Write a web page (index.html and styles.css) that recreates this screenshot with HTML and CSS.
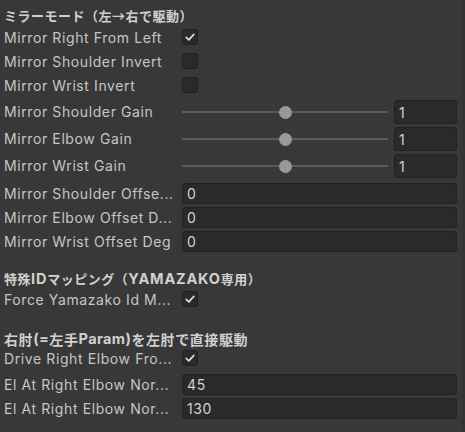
FILE: index.html
```html
<!DOCTYPE html>
<html lang="ja">
<head>
<meta charset="utf-8">
<link rel="stylesheet" href="styles.css">
</head>
<body>
<div class="panel">
  <div class="content">
    <div class="header h-first">ミラーモード（左→右で駆動）</div>
    <div class="row r24"><span class="label">Mirror Right From Left</span><span class="check"><svg viewBox="0 0 16 16" width="16" height="16"><polyline points="4.2,8.4 6.8,10.8 11.8,5.4" fill="none" stroke="#dcdcdc" stroke-width="1.7" stroke-linecap="round" stroke-linejoin="round"/></svg></span></div>
    <div class="row r24"><span class="label">Mirror Shoulder Invert</span><span class="check"></span></div>
    <div class="row r24"><span class="label">Mirror Wrist Invert</span><span class="check"></span></div>

    <div class="row r27 first-slider"><span class="label">Mirror Shoulder Gain</span><div class="slider"><div class="track"></div><div class="thumb"></div></div><div class="field num">1</div></div>
    <div class="row r27"><span class="label">Mirror Elbow Gain</span><div class="slider"><div class="track"></div><div class="thumb"></div></div><div class="field num">1</div></div>
    <div class="row r27"><span class="label">Mirror Wrist Gain</span><div class="slider"><div class="track"></div><div class="thumb"></div></div><div class="field num">1</div></div>

    <div class="row r24 first-offset"><span class="label">Mirror Shoulder Offse...</span><div class="field wide">0</div></div>
    <div class="row r24"><span class="label">Mirror Elbow Offset D...</span><div class="field wide">0</div></div>
    <div class="row r24"><span class="label">Mirror Wrist Offset Deg</span><div class="field wide">0</div></div>

    <div class="header h-second">特殊<span class="lat">ID</span>マッピング（<span class="lat">YAMAZAKO</span>専用）</div>
    <div class="row r22"><span class="label">Force Yamazako Id M...</span><span class="check"><svg viewBox="0 0 16 16" width="16" height="16"><polyline points="4.2,8.4 6.8,10.8 11.8,5.4" fill="none" stroke="#dcdcdc" stroke-width="1.7" stroke-linecap="round" stroke-linejoin="round"/></svg></span></div>

    <div class="header h-third">右肘<span class="lat">(=</span>左手<span class="lat">Param)</span>を左肘で直接駆動</div>
    <div class="row r20"><span class="label">Drive Right Elbow Fro...</span><span class="check"><svg viewBox="0 0 16 16" width="16" height="16"><polyline points="4.2,8.4 6.8,10.8 11.8,5.4" fill="none" stroke="#dcdcdc" stroke-width="1.7" stroke-linecap="round" stroke-linejoin="round"/></svg></span></div>
    <div class="row r24 first-el"><span class="label">El At Right Elbow Nor...</span><div class="field wide">45</div></div>
    <div class="row r24"><span class="label">El At Right Elbow Nor...</span><div class="field wide">130</div></div>
  </div>
  <div class="edge"></div>
</div>
</body>
</html>
```
FILE: styles.css
```css
html, body {
  margin: 0;
  padding: 0;
  background: #383838;
}
body {
  width: 465px;
  height: 432px;
  overflow: hidden;
  font-family: Inter, "Noto Sans CJK JP", sans-serif;
  font-size: 14px;
  letter-spacing: 0.6px;
  color: #c6c6c6;
}
.panel {
  display: flex;
  height: 432px;
}
.content {
  flex: 1;
  padding: 0 5px 0 4px;
  display: flex;
  flex-direction: column;
}
.edge {
  width: 3px;
  background: #333333;
}
.header {
  font-family: "Noto Sans CJK JP", sans-serif;
  font-size: 13px;
  letter-spacing: 0.5px;
  font-weight: 700;
  color: #d0d0d0;
  white-space: nowrap;
  display: flex;
  align-items: center;
}
.header .lat {
  font-family: Inter, sans-serif;
  font-size: 14.5px;
  letter-spacing: 0.8px;
}
.h-first { margin-top: 6px; height: 19px; }
.h-second { margin-top: 15px; height: 20px; }
.h-third {
  margin-top: 19px;
  height: 19px;
  font-size: 14px;
  letter-spacing: 0.6px;
}
.h-third .lat {
  font-size: 14.5px;
  letter-spacing: 0.4px;
}
.row {
  display: flex;
  align-items: center;
}
.r24 { height: 24px; }
.r27 { height: 27px; align-items: flex-start; }
.r22 { height: 22px; }
.r20 { height: 20px; }
.first-slider { margin-top: 1px; }
.first-offset { margin-top: 2px; }
.first-el { margin-top: 4px; }
.label {
  width: 178px;
  flex: none;
  white-space: nowrap;
  overflow: hidden;
}
.r27 .label { line-height: 27px; }
.check {
  width: 16px;
  height: 16px;
  box-sizing: border-box;
  background: #2a2a2a;
  border: 1px solid #202020;
  border-radius: 3px;
  display: flex;
  align-items: center;
  justify-content: center;
}
.check svg { display: block; flex: none; }
.slider {
  position: relative;
  flex: 1;
  height: 27px;
  margin-right: 6px;
}
.track {
  position: absolute;
  left: 0;
  right: 0;
  top: 13px;
  height: 2px;
  background: #5b5b5b;
}
.thumb {
  position: absolute;
  left: 50%;
  top: 7.5px;
  width: 13px;
  height: 13px;
  margin-left: -6.5px;
  border-radius: 50%;
  background: #999999;
}
.field {
  box-sizing: border-box;
  background: #2a2a2a;
  border: 1px solid #212121;
  border-radius: 3px;
  color: #d2d2d2;
  padding-left: 4px;
  display: flex;
  align-items: center;
}
.num {
  width: 63px;
  height: 24px;
  margin-top: 2px;
  flex: none;
}
.wide {
  flex: 1;
  height: 21px;
}
```
